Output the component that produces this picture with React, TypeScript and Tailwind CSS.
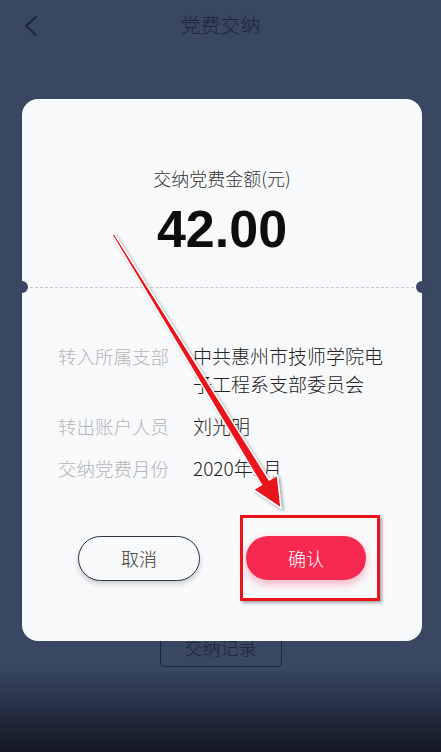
import React from 'react';

const CJK = { fontFamily: '"Noto Sans CJK SC", "Noto Sans", sans-serif' };

const rows = [
  { label: '转入所属支部', value: '中共惠州市技师学院电子工程系支部委员会' },
  { label: '转出账户人员', value: '刘光明' },
  { label: '交纳党费月份', value: '2020年1月' },
];

function Arrow() {
  // tapered red arrow drawn over the dialog (annotation)
  const sx = 113, sy = 234, tx = 281, ty = 508;
  const len = Math.hypot(tx - sx, ty - sy);
  const dx = (tx - sx) / len, dy = (ty - sy) / len;
  const px = dy, py = -dx;
  const bx = tx - dx * 30, by = ty - dy * 30;
  const pts = [
    [sx + px * 1.2, sy + py * 1.2],
    [bx + px * 4.5, by + py * 4.5],
    [bx + px * 14, by + py * 14],
    [tx, ty],
    [bx - px * 14, by - py * 14],
    [bx - px * 4.5, by - py * 4.5],
    [sx - px * 1.2, sy - py * 1.2],
  ]
    .map((p) => p.map((n) => n.toFixed(1)).join(','))
    .join(' ');
  return (
    <svg className="pointer-events-none absolute inset-0" width="441" height="752">
      <defs>
        <filter id="sh" x="-20%" y="-20%" width="140%" height="140%">
          <feDropShadow dx="2" dy="2" stdDeviation="1.5" floodColor="#000" floodOpacity="0.35" />
        </filter>
      </defs>
      <polygon points={pts} fill="#e8121c" stroke="#fff" strokeWidth="1.4" strokeLinejoin="miter" filter="url(#sh)" />
    </svg>
  );
}

export default function App() {
  return (
    <div className="relative flex h-[752px] w-[441px] flex-col overflow-hidden bg-[#394762]" style={CJK}>
      {/* header */}
      <div className="relative flex h-[50px] items-center justify-center">
        <svg className="absolute left-[22px] top-[14px]" width="18" height="24" viewBox="0 0 18 24">
          <path d="M14 3 L4 12 L14 21" fill="none" stroke="#1b2437" strokeWidth="1.8" strokeLinecap="round" strokeLinejoin="round" />
        </svg>
        <span className="text-[20px] font-light text-[#1d2639]">党费交纳</span>
      </div>

      {/* page content under the mask */}
      <div className="flex flex-1 flex-col items-center justify-end">
        <div className="mb-[4px] flex h-[40px] w-[122px] items-center justify-center rounded-[4px] border border-[#1b2540] text-[18px] font-light text-[#1d2639]">
          交纳记录
        </div>
        <div className="h-[81px] w-full bg-gradient-to-b from-[#36445e] via-[#262f42] to-[#131822]" />
      </div>

      {/* dialog */}
      <div className="absolute left-[22px] top-[99px] flex h-[542px] w-[400px] flex-col rounded-[16px] bg-[#f8f9fb]">
        <div className="flex h-[188px] flex-col items-center pt-[66px]">
          <div className="text-[18px] font-light leading-[26px] text-[#333]">交纳党费金额(元)</div>
          <div
            className="mt-[10px] text-[52px] font-bold leading-[56px] text-[#0d0d0d]"
            style={{ fontFamily: '"Liberation Sans", Arial, sans-serif' }}
          >
            42.00
          </div>
        </div>

        <div className="relative mx-[8px] h-0 border-t border-dashed border-[#c5c9d1]">
          <div className="absolute -left-[14px] -top-[7px] h-[12px] w-[12px] rounded-full bg-[#394762]" />
          <div className="absolute -right-[14px] -top-[7px] h-[12px] w-[12px] rounded-full bg-[#394762]" />
        </div>

        <div className="flex flex-col gap-[14px] pl-[36px] pt-[54px]">
          {rows.map((r) => (
            <div key={r.label} className="flex leading-[28px]">
              <div className="w-[135px] shrink-0 text-[18.5px] font-light text-[#b3b5b9]">{r.label}</div>
              <div className="w-[200px] text-[19px] font-light text-[#222]">{r.value}</div>
            </div>
          ))}
        </div>

        <div className="mt-[54px] flex justify-center gap-[46px]">
          <button className="flex h-[45px] w-[122px] items-center justify-center rounded-full border-[1.5px] border-[#2c3344] bg-[#f8f9fb] text-[18px] font-light text-[#333] shadow-[0_3px_5px_rgba(0,0,0,0.18)]">
            取消
          </button>
          <button className="flex h-[44px] w-[120px] items-center justify-center rounded-full bg-[#f5294f] text-[18px] font-light text-white shadow-[0_4px_8px_rgba(245,41,79,0.35)]">
            确认
          </button>
        </div>
      </div>

      {/* red annotation box */}
      <div className="pointer-events-none absolute left-[240px] top-[515px] h-[86px] w-[140px] border-[3px] border-[#e8141c] shadow-[2px_2px_3px_rgba(0,0,0,0.35)]" />

      <Arrow />
    </div>
  );
}
